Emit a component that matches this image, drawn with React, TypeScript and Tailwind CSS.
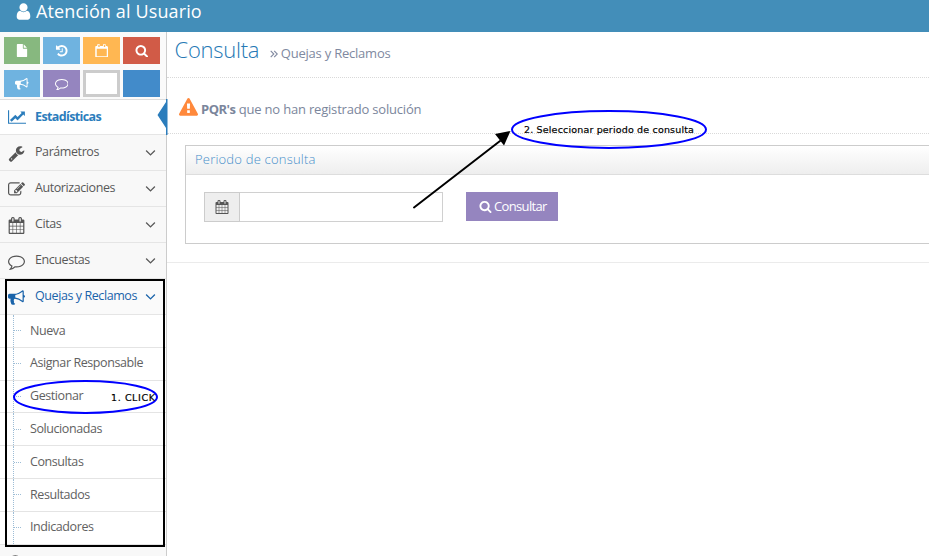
import type { ReactNode } from "react";

const paths = {
  user: "M1536 1399q0 109-62.5 187t-150.5 78h-854q-88 0-150.5-78t-62.5-187q0-85 8.5-160.5t31.5-152 58.5-131 94-89 134.5-34.5q131 128 313 128t313-128q76 0 134.5 34.5t94 89 58.5 131 31.5 152 8.5 160.5zm-256-887q0 159-112.5 271.5t-271.5 112.5-271.5-112.5-112.5-271.5 112.5-271.5 271.5-112.5 271.5 112.5 112.5 271.5z",
  file: "M1152 512v-472q22 14 36 28l408 408q14 14 28 36h-472zm-128 32q0 40 28 68t68 28h544v1056q0 40-28 68t-68 28h-1344q-40 0-68-28t-28-68v-1600q0-40 28-68t68-28h800v544z",
  history: "M1664 896q0 156-61 298t-164 245-245 164-298 61q-172 0-327-72.5t-264-204.5q-7-10-6.5-22.5t8.5-20.5l137-138q10-9 25-9 16 2 23 12 73 95 179 147t225 52q104 0 198.5-40.5t163.5-109.5 109.5-163.5 40.5-198.5-40.5-198.5-109.5-163.5-163.5-109.5-198.5-40.5q-98 0-188 35.5t-160 101.5l137 138q31 30 14 69-17 40-59 40h-448q-26 0-45-19t-19-45v-448q0-42 40-59 39-17 69 14l130 129q107-101 244.5-156.5t284.5-55.5q156 0 298 61t245 164 164 245 61 298zm-640-288v448q0 14-9 23t-23 9h-320q-14 0-23-9t-9-23v-64q0-14 9-23t23-9h224v-352q0-14 9-23t23-9h64q14 0 23 9t9 23z",
  search: "M1216 832q0-185-131.5-316.5t-316.5-131.5-316.5 131.5-131.5 316.5 131.5 316.5 316.5 131.5 316.5-131.5 131.5-316.5zm512 832q0 52-38 90t-90 38q-54 0-90-38l-343-342q-179 124-399 124-143 0-273.5-55.5t-225-150-150-225-55.5-273.5 55.5-273.5 150-225 225-150 273.5-55.5 273.5 55.5 225 150 150 225 55.5 273.5q0 220-124 399l343 343q37 37 37 90z",
  bullhorn: "M1664 640q53 0 90.5 37.5t37.5 90.5-37.5 90.5-90.5 37.5v384q0 52-38 90t-90 38q-417-347-812-380-58 19-91 66t-31 100.5 40 92.5q-20 33-23 65.5t6 58 33.5 55 48 50 61.5 50.5q-29 58-111.5 83t-168.5 11.5-132-55.5q-7-23-29.5-87.5t-32-94.5-23-89-15-101 3.5-98.5 22-110.5h-122q-66 0-113-47t-47-113v-192q0-66 47-113t113-47h480q435 0 896-384 52 0 90 38t38 90v384zm-128 604v-954q-394 302-768 343v270q377 42 768 341z",
  comment: "M896 384q-204 0-381.5 69.5t-282 187.5-104.5 255q0 112 71.5 213.5t201.5 175.5l87 50-27 96q-24 91-70 172 152-63 275-171l43-38 57 6q69 8 130 8 204 0 381.5-69.5t282-187.5 104.5-255-104.5-255-282-187.5-381.5-69.5zm896 512q0 174-120 321.5t-326 233-450 85.5q-70 0-145-8-198 175-460 242-49 14-114 22h-5q-15 0-27-10.5t-16-27.5v-1q-3-4-.5-12t2-10 4.5-9.5l6-9 7-8.5 8-9q7-8 31-34.5t34.5-38 31-39.5 32.5-51 27-59 26-76q-157-89-247.5-220t-90.5-281q0-174 120-321.5t326-233 450-85.5 450 85.5 326 233 120 321.5z",
  wrench: "M448 1472q0-26-19-45t-45-19-45 19-19 45 19 45 45 19 45-19 19-45zm644-420l-682 682q-37 37-90 37-52 0-91-37l-106-108q-38-36-38-90 0-53 38-91l681-681q39 98 114.5 173.5t173.5 114.5zm634-435q0 39-23 106-47 134-164.5 217.5t-258.5 83.5q-185 0-316.5-131.5t-131.5-316.5 131.5-316.5 316.5-131.5q58 0 121.5 16.5t107.5 46.5q16 11 16 28t-16 28l-293 169v224l193 107q5-3 79-48.5t135.5-81 70.5-35.5q15 0 23.5 10t8.5 25z",
  edit: "M888 1184l116-116-152-152-116 116v56h96v96h56zm440-720q-16-16-33 1l-350 350q-17 17-1 33t33-1l350-350q17-17 1-33zm80 594v190q0 119-84.5 203.5t-203.5 84.5h-832q-119 0-203.5-84.5t-84.5-203.5v-832q0-119 84.5-203.5t203.5-84.5h832q63 0 117 25 15 7 18 23 3 17-9 29l-49 49q-14 14-32 8-23-6-45-6h-832q-66 0-113 47t-47 113v832q0 66 47 113t113 47h832q66 0 113-47t47-113v-126q0-13 9-22l64-64q15-15 35-7t20 29zm-96-738l288 288-672 672h-288v-288zm444 132l-92 92-288-288 92-92q28-28 68-28t68 28l152 152q28 28 28 68t-28 68z",
  calendar: "M192 1664h288v-288h-288v288zm352 0h320v-288h-320v288zm-352-352h288v-320h-288v320zm352 0h320v-320h-320v320zm-352-384h288v-288h-288v288zm736 736h320v-288h-320v288zm-384-736h320v-288h-320v288zm768 736h288v-288h-288v288zm-384-352h320v-320h-320v320zm-352-864v-288q0-13-9.5-22.5t-22.5-9.5h-64q-13 0-22.5 9.5t-9.5 22.5v288q0 13 9.5 22.5t22.5 9.5h64q13 0 22.5-9.5t9.5-22.5zm736 864h288v-320h-288v320zm-384-384h320v-288h-320v288zm384 0h288v-288h-288v288zm32-480v-288q0-13-9.5-22.5t-22.5-9.5h-64q-13 0-22.5 9.5t-9.5 22.5v288q0 13 9.5 22.5t22.5 9.5h64q13 0 22.5-9.5t9.5-22.5zm384-64v1280q0 52-38 90t-90 38h-1408q-52 0-90-38t-38-90v-1280q0-52 38-90t90-38h128v-96q0-66 47-113t113-47h64q66 0 113 47t47 113v96h384v-96q0-66 47-113t113-47h64q66 0 113 47t47 113v96h128q52 0 90 38t38 90z",
  calendarEmpty: "M230 1640h1332v-1000h-1332v1000zm210-1256v-230q0-26 19-45t45-19h50q26 0 45 19t19 45v230zm734 0v-230q0-26 19-45t45-19h50q26 0 45 19t19 45v230zm586 0v1280q0 52-38 90t-90 38h-1472q-52 0-90-38t-38-90v-1280q0-52 38-90t90-38h128v-96q0-66 47-113t113-47h64q66 0 113 47t47 113v96h384v-96q0-66 47-113t113-47h64q66 0 113 47t47 113v96h128q52 0 90 38t38 90z",
  warning: "M1024 1375v-190q0-14-9.5-23.5t-22.5-9.5h-192q-13 0-22.5 9.5t-9.5 23.5v190q0 14 9.5 23.5t22.5 9.5h192q13 0 22.5-9.5t9.5-23.5zm-2-374l18-459q0-12-10-19-13-11-24-11h-220q-11 0-24 11-10 7-10 21l17 457q0 10 10 16.5t24 6.5h185q14 0 23.5-6.5t10.5-16.5zm-14-934l768 1408q35 63-2 126-17 29-46.5 46t-63.5 17h-1536q-34 0-63.5-17t-46.5-46q-37-63-2-126l768-1408q17-31 47-49t65-18 65 18 47 49z",
  angleDown: "M1395 736q0 13-10 23l-466 466q-10 10-23 10t-23-10l-466-466q-10-10-10-23t10-23l50-50q10-10 23-10t23 10l393 393 393-393q10-10 23-10t23 10l50 50q10 10 10 23z",
};

type IconName = keyof typeof paths;

function Icon({ name, className }: { name: IconName; className: string }) {
  return (
    <svg viewBox="0 0 1792 1792" fill="currentColor" fillRule="evenodd" preserveAspectRatio="none" className={`shrink-0 ${className}`}>
      <path d={paths[name]} />
    </svg>
  );
}

function ChartIcon() {
  return (
    <svg viewBox="0 0 2048 1792" fill="currentColor" className="h-[16px] w-[18px] shrink-0">
      <path d="M2048 1536v128h-2048v-1536h128v1408h1920zm-128-1248v435q0 21-19.5 29.5t-35.5-7.5l-121-121-633 633q-10 10-23 10t-23-10l-233-233-416 416-192-192 585-585q10-10 23-10t23 10l233 233 464-464-121-121q-16-16-7.5-35.5t29.5-19.5h435q14 0 23 9t9 23z" />
    </svg>
  );
}

const shortcuts: { color: string; icon?: IconName }[] = [
  { color: "bg-[#87b87f]", icon: "file" },
  { color: "bg-[#6fb3e0]", icon: "history" },
  { color: "bg-[#ffb752]", icon: "calendarEmpty" },
  { color: "bg-[#d15b47]", icon: "search" },
  { color: "bg-[#6fb3e0]", icon: "bullhorn" },
  { color: "bg-[#9585bf]", icon: "comment" },
  { color: "border-[3px] border-[#cccccc] bg-white" },
  { color: "bg-[#428bca]" },
];

const menu: { label: string; icon: IconName; active?: boolean }[] = [
  { label: "Parámetros", icon: "wrench" },
  { label: "Autorizaciones", icon: "edit" },
  { label: "Citas", icon: "calendar" },
  { label: "Encuestas", icon: "comment" },
  { label: "Quejas y Reclamos", icon: "bullhorn", active: true },
];

const submenu = ["Nueva", "Asignar Responsable", "Gestionar", "Solucionadas", "Consultas", "Resultados", "Indicadores"];

function MenuRow({ label, icon, active }: { label: string; icon: IconName; active?: boolean }) {
  return (
    <li className={`flex h-9 items-center border-b border-[#e5e5e5] pl-2 pr-[7px] ${active ? "bg-[#fafafa] text-[#1963aa]" : "bg-[#f8f8f8] text-[#585858]"}`}>
      <Icon name={icon} className={`mt-[2px] size-[17px] ${active ? "text-[#1963aa]" : "text-[#555]"}`} />
      <span className="-mt-px ml-[10px] w-0 grow whitespace-nowrap">{label}</span>
      <Icon name="angleDown" className="size-[17px]" />
    </li>
  );
}

function Sidebar() {
  return (
    <aside className="flex h-full w-[167px] shrink-0 flex-col border-r border-[#ccc] bg-[#f2f2f2] text-[12.5px] leading-4 tracking-[-0.42px]">
      <div className="grid h-[68px] shrink-0 grid-cols-[36px_37px_37px_37px] content-start gap-x-[3px] gap-y-[6px] border-b border-[#ddd] bg-[#fafafa] pl-1 pt-[5px]">
        {shortcuts.map((s, i) => (
          <div key={i} className={`flex h-[27px] items-center justify-center text-white ${s.color}`}>
            {s.icon && <Icon name={s.icon} className={s.icon === "file" ? "h-[13px] w-[12px]" : "size-[13.5px]"} />}
          </div>
        ))}
      </div>
      <ul className="shrink-0">
        <li className="relative flex h-[35px] items-center border-b border-[#e5e5e5] bg-white pl-2 font-bold text-[#2b7dbc]">
          <ChartIcon />
          <span className="ml-[9px] tracking-[-0.62px]">Estadísticas</span>
          <svg viewBox="0 0 10 36" className="absolute -right-[2px] -top-px h-9 w-[11px] fill-[#2b7dbc]">
            <path d="M0 16 8.5 3V29ZM8.5 0H10V36H8.5Z" />
          </svg>
        </li>
        {menu.map((m) => (
          <MenuRow key={m.label} {...m} />
        ))}
      </ul>
      <ul className="relative shrink-0 bg-white text-[#616161]">
        {submenu.map((label) => (
          <li key={label} className="flex h-[32.8px] items-center border-b border-[#e4e4e4] pl-[13px]">
            <span className="h-full border-l border-dotted border-[#9dbdd6]" />
            <span className="w-[7px] border-t border-dotted border-[#9dbdd6]" />
            <span className="-mt-[0.5px] ml-[9px] whitespace-nowrap">{label}</span>
          </li>
        ))}
      </ul>
      <div className="h-9 shrink-0 overflow-hidden bg-[#f8f8f8] pl-2 pt-[9px] text-[#555]">
        <Icon name="search" className="size-[17px]" />
      </div>
    </aside>
  );
}

function Rule({ children, className }: { children: ReactNode; className: string }) {
  return <div className={`flex items-center border-b border-dotted border-[#d9d9d9] ${className}`}>{children}</div>;
}

function Content() {
  return (
    <main className="min-w-0 grow bg-white">
      <Rule className="h-[46px] pl-[7.5px] text-[13px] text-[#8089a0]">
        <h1 className="-mt-[10px] text-[22px] font-light tracking-[-0.25px] text-[#2679b5]">Consulta</h1>
        <svg viewBox="0 0 8 8" className="-mt-px ml-[10.5px] size-2 fill-none stroke-[#8089a0] stroke-[1.1]">
          <path d="m.7.8 3.1 3.2L.7 7.2M4.2.8 7.3 4 4.2 7.2" />
        </svg>
        <span className="-mt-[2px] ml-[3px] tracking-[-0.22px]">Quejas y Reclamos</span>
      </Rule>
      <Rule className="h-[56px] pl-[12px] pt-[7px] text-[13px] text-[#7b869c]">
        <Icon name="warning" className="-mt-[4px] size-[19px] text-[#ff893c]" />
        <p className="ml-[3px] mt-[2px] tracking-[-0.19px]"><b className="tracking-[-0.5px]">PQR's</b> que no han registrado solución</p>
      </Rule>
      <div className="h-[129px] border-b border-[#ebebeb] pl-[18px] pt-[11px]">
        <section className="h-[99px] border border-r-0 border-[#ccc]">
          <h2 className="flex h-[29px] items-center border-b border-[#ddd] bg-linear-to-b from-white to-[#eee] pl-[9px] text-[13px] font-light tracking-[0.2px] text-[#478fca]">
            Periodo de consulta
          </h2>
          <div className="flex pl-[18px] pt-[17px]">
            <div className="flex h-[30px] w-9 items-center justify-center border border-[#ccc] bg-[#eee] text-[#555]">
              <Icon name="calendar" className="size-[14px]" />
            </div>
            <input aria-label="Periodo" className="h-[30px] w-[203px] border border-l-0 border-[#d0d0d0] bg-white outline-none" />
            <button className="ml-[23px] flex h-[29px] w-[92px] items-center bg-[#9585bf] pl-[13px] text-[13px] text-white">
              <Icon name="search" className="size-[13px]" />
              <span className="ml-[2px] tracking-[-0.65px]">Consultar</span>
            </button>
          </div>
        </section>
      </div>
    </main>
  );
}

function Annotations() {
  return (
    <>
      <svg viewBox="0 0 929 556" className="pointer-events-none absolute inset-0 h-[556px] w-[929px] fill-none">
        <rect x="6" y="280" width="158" height="266" stroke="#000" strokeWidth="2" />
        <ellipse cx="85.5" cy="397" rx="71.5" ry="16" stroke="#0000ff" strokeWidth="2" />
        <ellipse cx="609" cy="129.500" rx="97" ry="18.500" stroke="#0000ff" strokeWidth="2" />
        <path d="M414 207.500 500 141" stroke="#000" strokeWidth="2" strokeLinecap="round" />
        <path d="m510.500 131-15.500 3 9 11.500z" fill="#000" />
      </svg>
      <span className="absolute left-[111px] top-[391px] whitespace-nowrap font-['DejaVu_Sans',sans-serif] text-[9.5px] leading-[14px] tracking-[0.6px] text-black [-webkit-text-stroke:0.2px_black]">1. CLICK</span>
      <span className="absolute left-[524px] top-[123px] whitespace-nowrap font-['DejaVu_Sans',sans-serif] text-[9.5px] leading-[14px] tracking-[0.17px] text-black [-webkit-text-stroke:0.2px_black]">2. Seleccionar periodo de consulta</span>
    </>
  );
}

export default function App() {
  return (
    <div className="relative flex h-[556px] w-[929px] flex-col overflow-hidden bg-white font-['Open_Sans',sans-serif]">
      <header className="flex h-8 shrink-0 items-center bg-[#438eb9] pb-[9px] pl-[14px] text-white">
        <Icon name="user" className="h-[19px] w-[19px]" />
        <span className="ml-[3px] text-[18px] tracking-[0.13px]">Atención al Usuario</span>
      </header>
      <div className="flex min-h-0 grow">
        <Sidebar />
        <Content />
      </div>
      <Annotations />
    </div>
  );
}
